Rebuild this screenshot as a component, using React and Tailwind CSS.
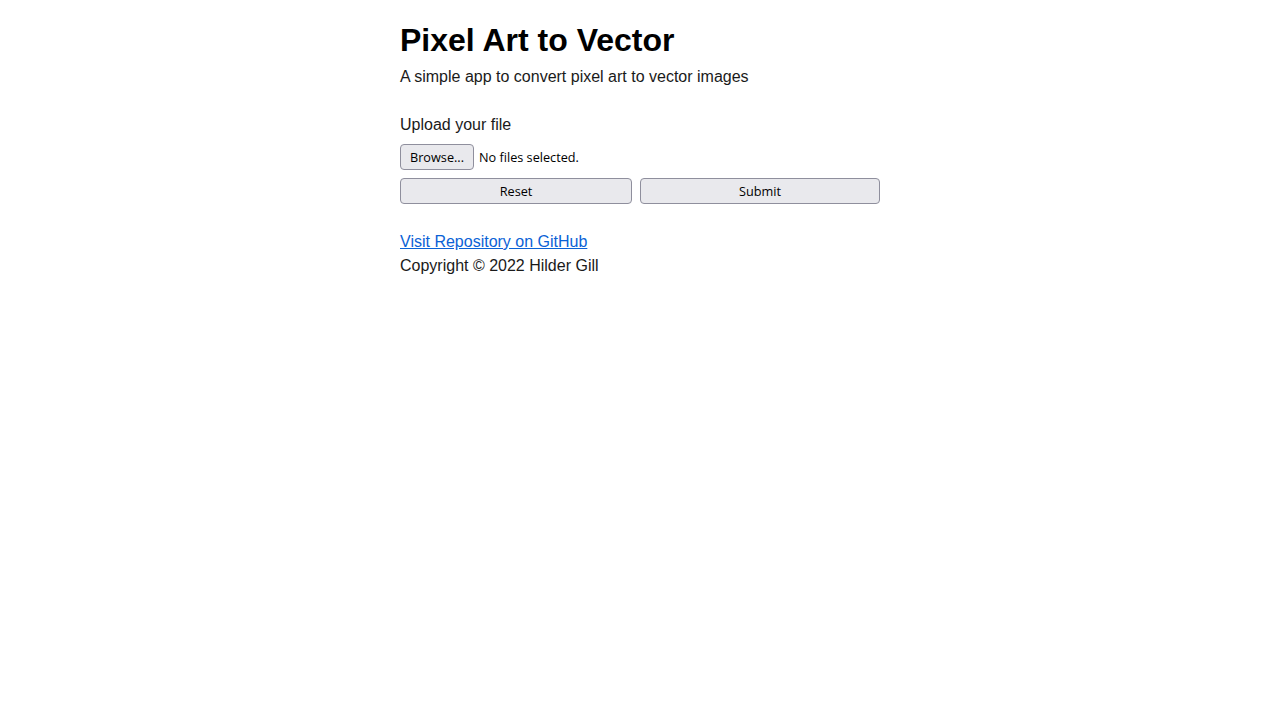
export default function App() {
  return (
    <div className="min-h-screen bg-white font-['Liberation_Sans',Arial,sans-serif] text-[#1a1a1a]">
      <div className="mx-auto w-[480px] pt-[22px]">
        <h1 className="text-[32px] leading-[37px] font-bold text-black">Pixel Art to Vector</h1>
        <p className="mt-[6px] text-[16px] leading-[24px]">A simple app to convert pixel art to vector images</p>
        <p className="mt-[24px] text-[16px] leading-[24px]">Upload your file</p>
        <div className="mt-[7px] flex items-center gap-[5px] font-['Open_Sans',sans-serif] text-[12.7px]">
          <button className="h-[26px] w-[74px] rounded-[4px] border border-[#8f8f9d] bg-[#e9e9ed] pt-[2px] text-[12.7px] text-black">Browse...</button>
          <span className="pt-[2px] text-black">No files selected.</span>
        </div>
        <div className="mt-[8px] flex gap-[8px] font-['Open_Sans',sans-serif]">
          <button className="h-[26px] w-[232px] rounded-[4px] border border-[#8f8f9d] bg-[#e9e9ed] pt-[2px] text-[12.7px] text-black">Reset</button>
          <button className="h-[26px] w-[240px] rounded-[4px] border border-[#8f8f9d] bg-[#e9e9ed] pt-[2px] text-[12.7px] text-black">Submit</button>
        </div>
        <div className="mt-[26px] text-[16px] leading-[24px]">
          <a href="#" className="text-[#0b62d6] underline">Visit Repository on GitHub</a>
        </div>
        <p className="text-[16px] leading-[24px]">Copyright © 2022 Hilder Gill</p>
      </div>
    </div>
  );
}
